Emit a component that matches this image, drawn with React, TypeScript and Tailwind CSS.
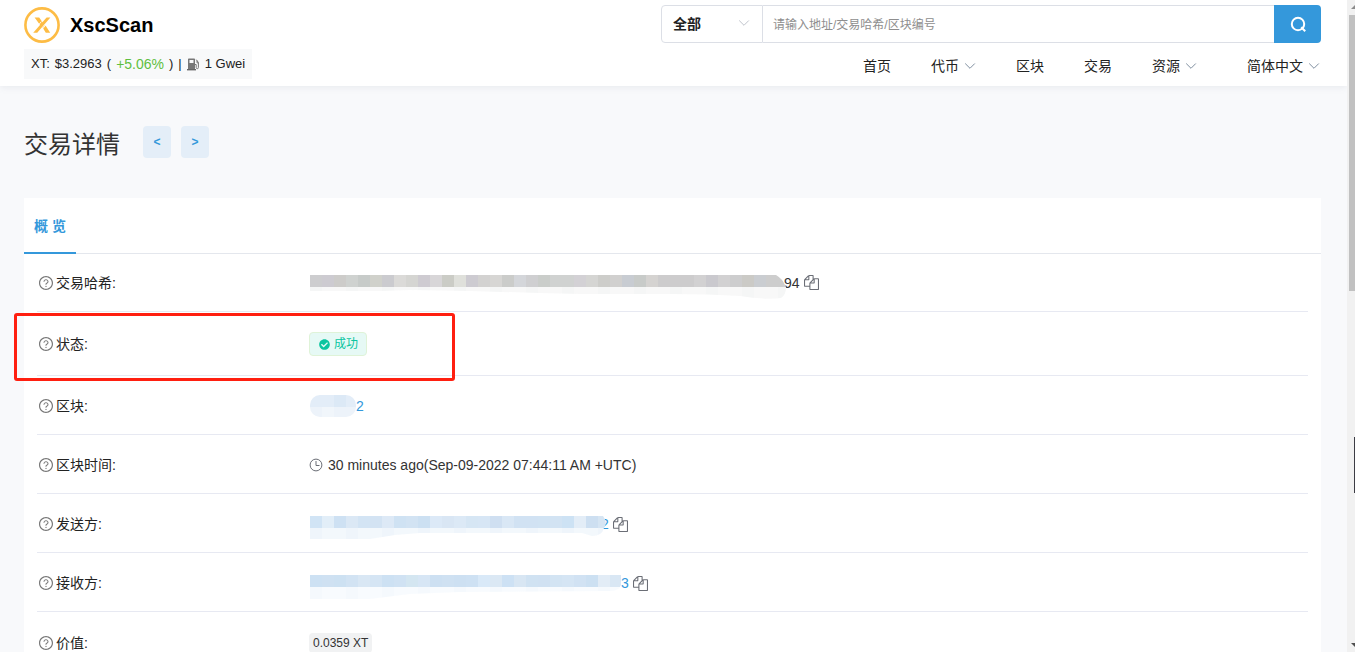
import React from 'react'
import { AiOutlineQuestionCircle } from 'react-icons/ai'
import { FaCheckCircle } from 'react-icons/fa'

function Logo() {
  return (
    <svg viewBox="0 0 36 36" className="size-9 shrink-0" fill="none" aria-hidden="true">
      <circle cx="18" cy="18" r="16.6" stroke="#fdbc45" strokeWidth="2.6" />
      <path d="M10.6 10.4h4.6l4.2 6.2-2.4 2.6zM18.6 20.6l2.6-2.6 5 7.8h-4.4z" fill="#fdbc45" />
      <path d="M22.6 10.4h3.8L13.2 25.8H9.2z" fill="#fdbc45" />
      <path d="M17.4 14.6l-6 7M24.6 14.8l-6 7" stroke="white" strokeWidth="0.9" />
    </svg>
  )
}

function Chevron({ className = '' }: { className?: string }) {
  return (
    <svg viewBox="0 0 12 8" className={`h-2 w-3 shrink-0 ${className}`} fill="none" stroke="currentColor" aria-hidden="true">
      <path d="M1.2 1.5L6 6.3l4.8-4.8" />
    </svg>
  )
}

function CopyIcon() {
  return (
    <svg viewBox="0 0 1792 1792" className="size-[15px]" fill="currentColor" aria-hidden="true">
      <path d="M1696 384q40 0 68 28t28 68v1216q0 40-28 68t-68 28h-960q-40 0-68-28t-28-68v-288h-544q-40 0-68-28t-28-68v-672q0-40 20-88t48-76l408-408q28-28 76-48t88-20h416q40 0 68 28t28 68v328q68-40 128-40h416zm-544 213l-299 299h299v-299zm-640-384l-299 299h299v-299zm196 647l316-316v-416h-384v416q0 40-28 68t-68 28h-416v640h512v-256q0-40 20-88t48-76zm956 804v-1152h-384v416q0 40-28 68t-68 28h-416v640h896z" />
    </svg>
  )
}

function CopyButton() {
  return (
    <button type="button" aria-label="复制" className="ml-1 text-[#6b6e76]">
      <CopyIcon />
    </button>
  )
}

function FuelIcon() {
  return (
    <svg viewBox="0 0 13 13" className="size-[13px]" fill="none" aria-hidden="true">
      <path d="M1 1.2Q1 .4 1.8.4h5.4q.8 0 .8.8V11H1zM2.5 2v3h4V2z" fill="#777" fillRule="evenodd" />
      <path d="M0 11h9v1.4H0z" fill="#666" />
      <path d="M8 6.5h1.2v3q0 1.2 1.1 1.2t1.1-1.2V4.4L9.2 1.6M10 2.6v2.2h1.4" stroke="#777" />
    </svg>
  )
}

function ClockIcon() {
  return (
    <svg viewBox="0 0 14 14" className="size-3.5" fill="none" stroke="#6b6e76" aria-hidden="true">
      <circle cx="7" cy="7" r="5.9" />
      <path d="M7 3v4.5h3.5" />
    </svg>
  )
}

function SearchIcon() {
  return (
    <svg viewBox="0 0 16 16" className="size-4" fill="none" stroke="white" strokeWidth="2" aria-hidden="true">
      <circle cx="8" cy="8" r="6.2" />
      <path d="M11.2 11.2l4 4" />
    </svg>
  )
}

interface MosaicProps {
  id: string
  colors: string[]
  width: number
  // outline of the blurred area
  shape: string
  fade: string
  className: string
}

function Mosaic({ id, colors, width, shape, fade, className }: MosaicProps) {
  return (
    <svg viewBox={`0 0 ${width} 16`} className={`relative shrink-0 overflow-visible ${className}`} aria-hidden="true">
      <clipPath id={id}>
        <path d={shape} />
      </clipPath>
      <g clipPath={`url(#${id})`}>
        {colors.map((c, i) => (
          <React.Fragment key={i}>
            <rect x={i * 12} y="0" width="12" height="12" fill={c} />
            <rect x={i * 12} y="12" width="12" height="14" fill={fade} opacity={i % 3 === 0 ? 1 : 0.75} />
          </React.Fragment>
        ))}
      </g>
    </svg>
  )
}

const hashColors = [
  '#cdcdcf', '#cdcbd1', '#cdccca', '#cfd2d0', '#c7cbc9', '#d0d1cb', '#cbcbcf', '#dbdad8', '#d5d5d2', '#cecbd1',
  '#d8d6d8', '#cbccc6', '#dfe0db', '#cdcbd1', '#d3d2d1', '#d7d6d4', '#cbccca', '#d4d6da', '#cfcfd1', '#cacdca',
  '#d0d2d1', '#d0d2d1', '#d3d1d5', '#d5d5d3', '#cdcdca', '#d1d0cf', '#c8ccd2', '#c8cbc9', '#d5d3d1', '#cdcccd',
  '#cdcccd', '#cdcccd', '#d2d1d2', '#cac9ce', '#d2d1d2', '#cdcdce', '#cbcac6', '#cacdd1', '#cdcdcd', '#cdcdcd',
]

const fromColors = [
  '#d1e4f5', '#e2eef8', '#cee1f3', '#dbe8f5', '#d3e4f4', '#d3e3f3', '#dde9f6', '#cfe2f3', '#d2e3f3', '#cce0f2',
  '#dce9f7', '#d9e6f4', '#dce9f6', '#d6e6f4', '#d7e6f5', '#cfdff1', '#d9e7f5', '#d1e2f3', '#d1e2f3', '#d1e3f3',
  '#d2e3f3', '#cde2f4', '#e3edf7', '#cddff1', '#d6e5f3',
]

const toColors = [
  '#cde1f3', '#cfe1f2', '#cde1f2', '#d2e3f3', '#d9e7f4', '#d5e5f4', '#cde1f3', '#d0e2f3', '#d4e6f1', '#d7e6f5',
  '#cde0f2', '#cfe1f2', '#cde0f2', '#cee1f3', '#d9e9f8', '#dbe8f4', '#cde1f4', '#d8e6f3', '#d0e2f2', '#d0e1f2',
  '#d3e4f3', '#d5e5f4', '#d1e2f3', '#cce0f2', '#e2ecf6', '#d9e7f4',
]

function HiddenBlock() {
  return (
    <svg viewBox="0 0 46 22" className="h-[22px] w-[46px] shrink-0" aria-hidden="true">
      <clipPath id="blk">
        <rect width="46" height="22" rx="10" />
      </clipPath>
      <g clipPath="url(#blk)">
        <rect width="46" height="12" fill="#e3edf8" />
        <rect x="24" width="12" height="12" fill="#dce9f6" />
        <rect y="12" width="46" height="10" fill="#edf3fa" />
        <rect x="12" y="12" width="12" height="10" fill="#f1f6fb" />
      </g>
    </svg>
  )
}

interface RowProps {
  label: string
  size?: string
  children: React.ReactNode
  marked?: boolean
}

function Row({ label, size = 'h-[59px] pt-0.5', children, marked }: RowProps) {
  return (
    <div className={`relative flex items-center border-b border-[#e7e9f2] ${size}`}>
      <dt className="flex w-[272px] shrink-0 items-center gap-0.5 pl-px text-[#222]">
        <AiOutlineQuestionCircle className="size-4 text-[#777]" />
        {label}:
      </dt>
      <dd className="flex min-w-0 items-center">{children}</dd>
      {marked && <div className="absolute top-px -left-[23px] h-[68px] w-[441px] rounded-[3px] border-3 border-[#ff1f10]" />}
    </div>
  )
}

const nav = [
  { label: '首页', menu: false, space: '' },
  { label: '代币', menu: true, space: 'ml-10' },
  { label: '区块', menu: false, space: 'ml-10' },
  { label: '交易', menu: false, space: 'ml-10' },
  { label: '资源', menu: true, space: 'ml-10' },
  { label: '简体中文', menu: true, space: 'ml-[50px]' },
]

function Header() {
  return (
    <header className="flex h-[86px] shrink-0 justify-between bg-white pr-[26px] pl-6 shadow-[0_2px_6px_rgba(140,152,164,0.12)]">
      <div className="pt-[7px]">
        <a href="#" className="flex items-center gap-2.5 text-xl font-bold text-black">
          <Logo />
          XscScan
        </a>
        <div className="mt-1.5 flex h-[30px] items-center gap-[5px] bg-[#f8f9fa] px-[7px] text-[13px] text-[#222]">
          <span>XT:</span>
          <span>$3.2963</span>
          <span>(</span>
          <span className="text-sm text-[#5fbf3f]">+5.06%</span>
          <span>)</span>
          <span>|</span>
          <FuelIcon />
          <span>1 Gwei</span>
        </div>
      </div>
      <div className="flex w-[660px] flex-col items-end pt-[5px]">
        <form className="flex h-[38px] w-full">
          <div className="relative w-[102px] rounded-l border border-[#dcdfe6]">
            <select aria-label="类型" className="h-full w-full appearance-none bg-transparent pl-[11px] text-sm font-bold text-[#222]">
              <option>全部</option>
            </select>
            <Chevron className="absolute top-[13px] right-3 text-[#c0c4cc]" />
          </div>
          <input
            aria-label="搜索"
            placeholder="请输入地址/交易哈希/区块编号"
            className="min-w-0 flex-1 border-y border-[#dcdfe6] px-2.5 pt-0.5 text-xs outline-none placeholder:text-[#8e8e8e]"
          />
          <button type="button" aria-label="搜索" className="flex w-[47px] items-center justify-center rounded-r bg-[#3498db]">
            <SearchIcon />
          </button>
        </form>
        <nav className="mt-[13px] flex items-center pr-px text-sm text-[#222]">
          {nav.map((n) => (
            <a key={n.label} href="#" className={`flex items-center gap-[5px] ${n.space}`}>
              {n.label}
              {n.menu && <Chevron className="text-[#7f8fa0]" />}
            </a>
          ))}
        </nav>
      </div>
    </header>
  )
}

function Scrollbar() {
  return (
    <div className="relative w-2 shrink-0 bg-[#f1f1f1] pt-[15px] pl-0.5" aria-hidden="true">
      <div className="h-[276px] bg-[#c1c1c1]" />
      <svg viewBox="0 0 4 4" className="absolute top-[5px] right-0 size-1">
        <path d="M0 4l4-4v4z" fill="#8b8b8b" />
      </svg>
      <svg viewBox="0 0 4 4" className="absolute right-0 bottom-[5px] size-1">
        <path d="M0 0l4 4V0z" fill="#505050" />
      </svg>
      <div className="absolute top-[437px] right-0 h-14 w-px bg-[#3c3c44]" />
    </div>
  )
}

export default function App() {
  return (
    <div className="flex h-screen overflow-hidden bg-[#f8f9fb] font-['Liberation_Sans','Noto_Sans_CJK_SC',sans-serif] text-sm text-[#333]">
      <div className="flex min-w-0 flex-1 flex-col overflow-hidden">
        <Header />
        <main className="pr-[26px] pl-6">
          <div className="flex h-28 items-center">
            <h1 className="mr-[23px] pt-1.5 text-2xl text-[#333]">交易详情</h1>
            <button type="button" className="mr-2.5 h-8 w-7 rounded-sm bg-[#e4eef8] text-xs font-bold text-[#3498db]">
              &lt;
            </button>
            <button type="button" className="h-8 w-7 rounded-sm bg-[#e4eef8] text-xs font-bold text-[#3498db]">
              &gt;
            </button>
          </div>

          <section className="bg-white">
            <div className="flex h-14 border-b border-[#e4e7ed]">
              <button type="button" className="-mb-px h-14 border-b-2 border-[#3498db] px-2.5 pt-0.5 font-bold text-[#3498db]">
                概 览
              </button>
            </div>
            <dl className="px-[13px]">
              <Row label="交易哈希" size="h-[58px]">
                <Mosaic
                  id="hash"
                  colors={hashColors}
                  width={475}
                  className="ml-px h-4 w-[475px]"
                  fade="#f5f6f6"
                  shape="M0 0H466Q472 3 476 12Q476 20 471 23Q455 25 430 21Q400 19 360 19H270L230 18L160 16L100 15L70 16H0z"
                />
                <span className="-ml-px">94</span>
                <CopyButton />
              </Row>
              <Row label="状态" size="h-16 pt-px" marked>
                <span className="flex h-6 items-center gap-1 rounded border border-[#dff3d8] bg-[#e6f9f5] pr-2 pl-[9px] text-xs text-[#0ac5a0]">
                  <FaCheckCircle className="size-[11px]" />
                  成功
                </span>
              </Row>
              <Row label="区块">
                <a href="#" className="ml-px flex items-center text-[#3498db]">
                  <HiddenBlock />2
                </a>
              </Row>
              <Row label="区块时间">
                <span className="flex items-center gap-[5px]">
                  <ClockIcon />
                  30 minutes ago(Sep-09-2022 07:44:11 AM +UTC)
                </span>
              </Row>
              <Row label="发送方">
                <Mosaic
                  id="from"
                  colors={fromColors}
                  width={296}
                  className="ml-px h-4 w-[296px]"
                  fade="#eff5fb"
                  shape="M0 0H293Q298 6 294 12Q292 20 282 20L272 17H110L85 19L60 23H0z"
                />
                <a href="#" className="-ml-[5px] text-[#3498db]">2</a>
                <CopyButton />
              </Row>
              <Row label="接收方">
                <Mosaic
                  id="to"
                  colors={toColors}
                  width={311}
                  className="ml-px h-4 w-[311px]"
                  fade="#f5f9fd"
                  shape="M0 0H311V10Q309 16 300 16L150 17L100 19L60 24H0z"
                />
                <a href="#" className="text-[#3498db]">3</a>
                <CopyButton />
              </Row>
              <Row label="价值" size="h-[62px]">
                <span className="rounded bg-[#f1f2f3] px-1 py-0.5 text-xs">0.0359 XT</span>
              </Row>
            </dl>
          </section>
        </main>
      </div>
      <Scrollbar />
    </div>
  )
}
